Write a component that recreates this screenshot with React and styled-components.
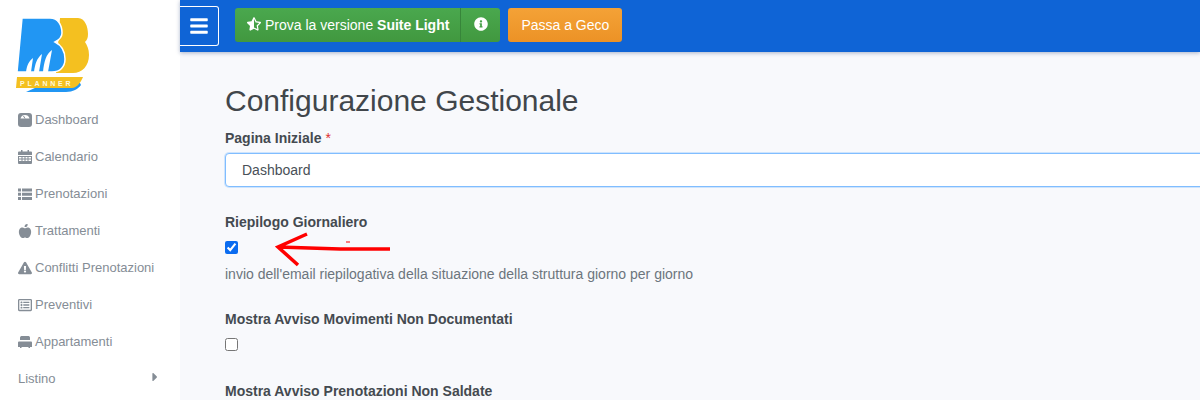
import styled, { createGlobalStyle } from "styled-components";
import {
  FaAppleAlt,
  FaExclamationTriangle,
  FaRegListAlt,
  FaBars,
  FaStarHalfAlt,
  FaInfoCircle,
  FaCaretRight,
} from "react-icons/fa";

const GlobalStyle = createGlobalStyle`
  html, body {
    margin: 0;
    height: 400px;
    overflow: hidden;
    font-family: "Liberation Sans", Arial, sans-serif;
  }
`;

const StyledPage = styled.div`
  width: 1200px;
  height: 400px;
  display: flex;
  overflow: hidden;
  background-color: #f8f9fc;
`;

const StyledSidebar = styled.aside`
  width: 180px;
  flex-shrink: 0;
  background-color: #fff;
`;

const StyledLogo = styled.div`
  height: 101px;
  padding: 17px 0 0 16px;
  box-sizing: border-box;
`;

const StyledMenu = styled.nav`
  display: grid;
  grid-auto-rows: 37px;
`;

const StyledMenuItem = styled.div`
  padding: 0 18px;
  display: flex;
  align-items: center;
  gap: 3px;
  font-size: 13px;
  color: #858d96;

  svg {
    width: 14px;
    height: 14px;
    flex-shrink: 0;
  }
`;

const StyledCaret = styled(FaCaretRight)`
  margin-left: auto;
  margin-top: -4px;
`;

const StyledMain = styled.div`
  flex: 1;
  min-width: 0;
`;

const StyledTopbar = styled.header`
  height: 52px;
  padding-top: 6px;
  box-sizing: border-box;
  display: flex;
  align-items: flex-start;
  background-color: #0f64d6;
  box-shadow: 0 1px 4px rgba(20, 50, 110, 0.35);
`;

const StyledToggle = styled.button`
  width: 39px;
  height: 40px;
  margin-right: 16px;
  padding: 0;
  display: flex;
  align-items: center;
  justify-content: center;
  border: 1px solid #fff;
  border-left: 0;
  border-radius: 0 3px 3px 0;
  background: transparent;
  color: #fff;

  svg {
    width: 18px;
    height: 20px;
  }
`;

const StyledSplit = styled.div`
  height: 34px;
  margin: 2px 8px 0 0;
  display: flex;
  border-radius: 3px;
  overflow: hidden;
`;

const StyledGreen = styled.div`
  padding: 0 ${({ $divider }) => ($divider ? "12px 0 13px" : "11px 0 12px")};
  display: flex;
  align-items: center;
  gap: 4px;
  font-size: 14px;
  color: #fff;
  background: linear-gradient(#4aa84e, #41983f);
  border-left: ${({ $divider }) => ($divider ? "1px solid #37853a" : "0")};

  svg {
    width: 14px;
    height: 14px;
    margin-top: -2px;
  }
`;

const StyledOrange = styled.button`
  height: 34px;
  margin-top: 2px;
  padding: 0 13px;
  border: 0;
  border-radius: 3px;
  font: 14px "Liberation Sans", Arial, sans-serif;
  color: #fff;
  background: linear-gradient(#f4a237, #ec9226);
`;

const StyledContent = styled.main`
  position: relative;
  padding: 31px 0 0 45px;
`;

const StyledTitle = styled.h1`
  margin: 0 0 11px;
  font-size: 30px;
  font-weight: 400;
  line-height: 36px;
  color: #41464b;
`;

const StyledField = styled.div`
  margin-bottom: ${({ $gap }) => $gap}px;
`;

const StyledLabel = styled.div`
  font-size: 14px;
  font-weight: 700;
  line-height: 17px;
  color: #444a50;

  span {
    color: #e02f2f;
    font-weight: 400;
  }
`;

const StyledSelect = styled.div`
  height: 34px;
  width: 1010px;
  margin-top: 6px;
  padding: 0 16px;
  display: flex;
  align-items: center;
  box-sizing: border-box;
  border: 1px solid #80bdff;
  border-radius: 4px;
  box-shadow: 0 0 0 1px rgba(128, 189, 255, 0.35);
  background-color: #fff;
  font-size: 14px;
  color: #495057;
`;

const StyledCheckbox = styled.input.attrs({ type: "checkbox" })`
  display: block;
  width: 13px;
  height: 13px;
  margin: 10px 0 0;
  accent-color: #0b6cf0;
`;

const StyledHelp = styled.div`
  margin-top: 12px;
  font-size: 14px;
  line-height: 17px;
  color: #6c757d;
`;

const StyledArrow = styled.svg`
  position: absolute;
  left: 90px;
  top: 180px;
  width: 125px;
  height: 40px;
`;

const DashboardIcon = () => (
  <svg viewBox="0 0 14 14">
    <rect width="14" height="14" rx="3" fill="currentColor" />
    <path d="M2.5 5.5C3 3 5 2 7 2s4 1 4.5 3.5z" fill="#fff" />
    <path d="M7 5.5L5.5 3" stroke="currentColor" strokeWidth="1" />
  </svg>
);

const CalendarIcon = () => (
  <svg viewBox="0 0 14 14">
    <path
      d="M3 0h1.5v1.5h5V0H11v1.5h2a1 1 0 0 1 1 1V5H0V2.5a1 1 0 0 1 1-1h2z"
      fill="currentColor"
    />
    <path
      d="M0 6h14v7a1 1 0 0 1-1 1H1a1 1 0 0 1-1-1zm1 1v1.5h2.5V7zm3.5 0v1.5H6.5V7zm3 0v1.5h2V7zm3 0v1.5H13V7zM1 9.5V11h2.5V9.5zm3.5 0V11h2V9.5zm3 0V11h2V9.5zm3 0V11H13V9.5z"
      fill="currentColor"
      fillRule="evenodd"
    />
  </svg>
);

const ListIcon = () => (
  <svg viewBox="0 0 14 14">
    <path
      d="M0 1.5h3v3H0zM4 1.5h10v3H4zM0 5.75h3v3H0zM4 5.75h10v3H4zM0 10h3v3H0zM4 10h10v3H4z"
      fill="currentColor"
    />
  </svg>
);

const BedIcon = () => (
  <svg viewBox="0 0 14 14">
    <path d="M2 2.5C2 1.5 3 1 4 1h6c1 0 2 .5 2 1.5V5H2z" fill="currentColor" />
    <path
      d="M1 6.5h12a1 1 0 0 1 1 1V12h-2v1h-1.5v-1h-7v1H2v-1H0V7.5a1 1 0 0 1 1-1z"
      fill="currentColor"
    />
  </svg>
);

const menuItems = [
  { icon: <DashboardIcon />, label: "Dashboard" },
  { icon: <CalendarIcon />, label: "Calendario" },
  { icon: <ListIcon />, label: "Prenotazioni" },
  { icon: <FaAppleAlt />, label: "Trattamenti" },
  { icon: <FaExclamationTriangle />, label: "Conflitti Prenotazioni" },
  { icon: <FaRegListAlt />, label: "Preventivi" },
  { icon: <BedIcon />, label: "Appartamenti" },
  { label: "Listino", caret: true },
];

const Logo = () => (
  <svg width="74" height="76" viewBox="0 0 74 76">
    <path
      d="M44 1H62C69 1 72 10 72 17C72 21 71 23 69 25C71 28 73 32 73 38C73 49 66 56 57 56H40Z"
      fill="#f4c020"
    />
    <path
      d="M6 1H34C42 1 46 8 46 16C46 20 43 23 39 25C45 28 49 34 49 42C49 50 44 55 36 55H1Z"
      fill="#2196f3"
      stroke="#fff"
      strokeWidth="1.5"
    />
    <path
      d="M10 55C11 48 13 44 17 41L15 55ZM18 55C19 47 21 41 26 37L23 55ZM27 55C28 45 30 37 36 33L32 55Z"
      fill="#fff"
    />
    <path d="M10 75H50C57 75 62 72 65 68L64 66H30Z" fill="#2196f3" />
    <path d="M1 60H67C64 67 60 71 56 71H0Z" fill="#f4c020" />
    <text
      x="4"
      y="68.5"
      fontSize="7"
      fontWeight="700"
      letterSpacing="2.8"
      fill="#fff8dc"
      fontFamily="Liberation Sans"
    >
      PLANNER
    </text>
  </svg>
);

const App = () => {
  return (
    <StyledPage>
      <GlobalStyle />

      <StyledSidebar>
        <StyledLogo>
          <Logo />
        </StyledLogo>

        <StyledMenu>
          {menuItems.map((item) => (
            <StyledMenuItem key={item.label}>
              {item.icon}
              {item.label}
              {item.caret && <StyledCaret />}
            </StyledMenuItem>
          ))}
        </StyledMenu>
      </StyledSidebar>

      <StyledMain>
        <StyledTopbar>
          <StyledToggle>
            <FaBars />
          </StyledToggle>

          <StyledSplit>
            <StyledGreen>
              <FaStarHalfAlt />
              <span>
                Prova la versione <b>Suite Light</b>
              </span>
            </StyledGreen>
            <StyledGreen $divider>
              <FaInfoCircle />
            </StyledGreen>
          </StyledSplit>

          <StyledOrange>Passa a Geco</StyledOrange>
        </StyledTopbar>

        <StyledContent>
          <StyledTitle>Configurazione Gestionale</StyledTitle>

          <StyledField $gap={27}>
            <StyledLabel>
              Pagina Iniziale <span>*</span>
            </StyledLabel>
            <StyledSelect>Dashboard</StyledSelect>
          </StyledField>

          <StyledField $gap={28}>
            <StyledLabel>Riepilogo Giornaliero</StyledLabel>
            <StyledCheckbox defaultChecked />
            <StyledHelp>
              invio dell'email riepilogativa della situazione della struttura
              giorno per giorno
            </StyledHelp>
          </StyledField>

          <StyledField $gap={32}>
            <StyledLabel>Mostra Avviso Movimenti Non Documentati</StyledLabel>
            <StyledCheckbox />
          </StyledField>

          <StyledField $gap={0}>
            <StyledLabel>Mostra Avviso Prenotazioni Non Saldate</StyledLabel>
          </StyledField>

          <StyledArrow viewBox="0 0 125 40">
            <path
              d="M120 17H70L8 15M37 2L8 15 28 33"
              fill="none"
              stroke="#f00"
              strokeWidth="3.5"
            />
            <path d="M76 10H80" stroke="#f00" strokeWidth="1" />
          </StyledArrow>
        </StyledContent>
      </StyledMain>
    </StyledPage>
  );
};

export default App;
